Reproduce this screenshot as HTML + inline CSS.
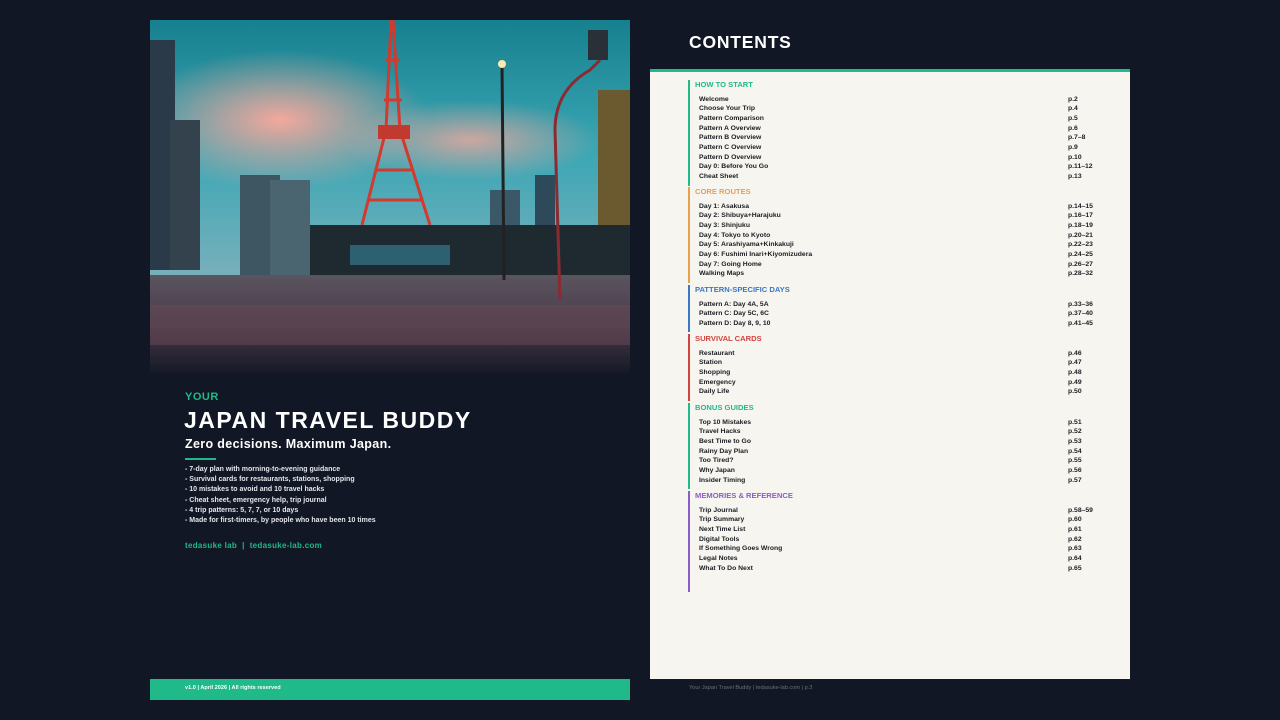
<!DOCTYPE html>
<html><head><meta charset="utf-8"><style>
*{margin:0;padding:0;box-sizing:border-box}
body{width:1280px;height:720px;background:#121725;position:relative;overflow:hidden;font-family:"Liberation Sans",sans-serif}
.abs{position:absolute}
.w{color:#fff;font-weight:bold}
.bul{font-size:7px;color:#e4e6ea;font-weight:bold;line-height:10.2px}
.sec{position:absolute;left:688px;width:460px;border-left:2px solid}
.sh{position:absolute;left:5px;font-size:7.6px;font-weight:bold;top:0px}
.it{position:absolute;left:9px;font-size:6.8px;color:#1a1c22;font-weight:bold;white-space:nowrap;margin-top:1.5px}
.pg{position:absolute;left:378px;font-size:6.8px;color:#1a1c22;font-weight:bold;margin-top:1.5px}
</style></head><body>
<svg class="abs" style="left:150px;top:20px" width="480" height="356" viewBox="0 0 480 356">
<defs>
<linearGradient id="sky" x1="0" y1="0" x2="0" y2="1"><stop offset="0" stop-color="#17808f"/><stop offset=".5" stop-color="#3aa6b4"/><stop offset="1" stop-color="#7ab0bc"/></linearGradient>
<linearGradient id="gr" x1="0" y1="0" x2="0" y2="1"><stop offset="0" stop-color="#5a5560"/><stop offset=".5" stop-color="#4a3a48"/><stop offset="1" stop-color="#121725"/></linearGradient>
<radialGradient id="pk" cx=".5" cy=".5" r=".5"><stop offset="0" stop-color="#f3a89c"/><stop offset="1" stop-color="#f0a59a" stop-opacity="0"/></radialGradient>
</defs>
<rect width="480" height="260" fill="url(#sky)"/>
<ellipse cx="130" cy="100" rx="150" ry="70" fill="url(#pk)"/>
<ellipse cx="320" cy="120" rx="130" ry="40" fill="url(#pk)" opacity=".8"/>
<rect x="0" y="20" width="25" height="230" fill="#2a3a48"/>
<rect x="20" y="100" width="30" height="150" fill="#34424e"/>
<rect x="90" y="155" width="40" height="100" fill="#3e5562"/>
<rect x="120" y="160" width="40" height="95" fill="#4a6470"/>
<rect x="340" y="170" width="30" height="85" fill="#3a5868"/>
<rect x="385" y="155" width="20" height="100" fill="#2e4a5a"/>
<g stroke="#d23a2e" stroke-width="3" fill="none">
<path d="M241 0 L236 110 L212 205 M243 0 L250 110 L280 205"/>
<path d="M236 40 L250 40 M234 80 L252 80 M226 150 L262 150 M218 180 L272 180"/>
</g>
<rect x="228" y="105" width="32" height="14" fill="#c2392f"/>
<rect x="448" y="70" width="32" height="220" fill="#6b5a30"/>
<rect x="160" y="205" width="330" height="50" fill="#1e2a30"/>
<rect x="200" y="225" width="100" height="20" fill="#2d6070"/>
<rect x="0" y="255" width="480" height="101" fill="url(#gr)"/>
<rect x="0" y="285" width="480" height="40" fill="#6a4a58" opacity=".5"/>
<line x1="352" y1="45" x2="354" y2="260" stroke="#222" stroke-width="3"/>
<circle cx="352" cy="44" r="4" fill="#ffe8b0"/>
<path d="M410 280 L405 110 Q405 70 440 50 L450 40" stroke="#8b2a30" stroke-width="3" fill="none"/>
<rect x="438" y="10" width="20" height="30" fill="#2a3038"/>
</svg>
<div class="abs" style="left:185px;top:391px;font-size:11px;font-weight:bold;color:#1fb98a;letter-spacing:.5px">YOUR</div>
<div class="abs w" style="left:184px;top:407px;font-size:23px;letter-spacing:1.5px">JAPAN TRAVEL BUDDY</div>
<div class="abs w" style="left:185px;top:437px;font-size:12.5px;letter-spacing:.35px">Zero decisions. Maximum Japan.</div>
<div class="abs" style="left:185px;top:458px;width:31px;height:2px;background:#1fb98a"></div>
<div class="abs bul" style="left:185px;top:465px">- 7-day plan with morning-to-evening guidance<br>- Survival cards for restaurants, stations, shopping<br>- 10 mistakes to avoid and 10 travel hacks<br>- Cheat sheet, emergency help, trip journal<br>- 4 trip patterns: 5, 7, 7, or 10 days<br>- Made for first-timers, by people who have been 10 times</div>
<div class="abs" style="left:185px;top:541px;font-size:8px;font-weight:bold;color:#1fb98a;letter-spacing:.3px">tedasuke lab &nbsp;|&nbsp; tedasuke-lab.com</div>
<div class="abs" style="left:150px;top:679px;width:480px;height:21px;background:#1fb98a"></div>
<div class="abs w" style="left:185px;top:685px;font-size:5.6px">v1.0 | April 2026 | All rights reserved</div>

<div class="abs" style="left:650px;top:20px;width:480px;height:49px;background:#121725"></div>
<div class="abs w" style="left:689px;top:32px;font-size:17.5px;letter-spacing:.8px">CONTENTS</div>
<div class="abs" style="left:650px;top:69px;width:480px;height:3px;background:#1fb98a"></div>
<div class="abs" style="left:650px;top:72px;width:480px;height:607px;background:#f7f5ef"></div>
<div class="abs" style="left:689px;top:685px;font-size:5.6px;color:#6a6f7a">Your Japan Travel Buddy | tedasuke-lab.com | p.3</div>

<div class="sec" style="top:80px;height:106px;border-color:#1fb98a"><div class="sh" style="color:#1fb98a">HOW TO START</div>
<div class="it" style="top:14px">Welcome</div><div class="pg" style="top:14px">p.2</div>
<div class="it" style="top:23.7px">Choose Your Trip</div><div class="pg" style="top:23.7px">p.4</div>
<div class="it" style="top:33.4px">Pattern Comparison</div><div class="pg" style="top:33.4px">p.5</div>
<div class="it" style="top:43.1px">Pattern A Overview</div><div class="pg" style="top:43.1px">p.6</div>
<div class="it" style="top:52.8px">Pattern B Overview</div><div class="pg" style="top:52.8px">p.7–8</div>
<div class="it" style="top:62.5px">Pattern C Overview</div><div class="pg" style="top:62.5px">p.9</div>
<div class="it" style="top:72.2px">Pattern D Overview</div><div class="pg" style="top:72.2px">p.10</div>
<div class="it" style="top:81.9px">Day 0: Before You Go</div><div class="pg" style="top:81.9px">p.11–12</div>
<div class="it" style="top:91.6px">Cheat Sheet</div><div class="pg" style="top:91.6px">p.13</div></div>

<div class="sec" style="top:187px;height:96px;border-color:#e8a04a"><div class="sh" style="color:#e8a04a">CORE ROUTES</div>
<div class="it" style="top:14px">Day 1: Asakusa</div><div class="pg" style="top:14px">p.14–15</div>
<div class="it" style="top:23.7px">Day 2: Shibuya+Harajuku</div><div class="pg" style="top:23.7px">p.16–17</div>
<div class="it" style="top:33.4px">Day 3: Shinjuku</div><div class="pg" style="top:33.4px">p.18–19</div>
<div class="it" style="top:43.1px">Day 4: Tokyo to Kyoto</div><div class="pg" style="top:43.1px">p.20–21</div>
<div class="it" style="top:52.8px">Day 5: Arashiyama+Kinkakuji</div><div class="pg" style="top:52.8px">p.22–23</div>
<div class="it" style="top:62.5px">Day 6: Fushimi Inari+Kiyomizudera</div><div class="pg" style="top:62.5px">p.24–25</div>
<div class="it" style="top:72.2px">Day 7: Going Home</div><div class="pg" style="top:72.2px">p.26–27</div>
<div class="it" style="top:81.9px">Walking Maps</div><div class="pg" style="top:81.9px">p.28–32</div></div>

<div class="sec" style="top:285px;height:47px;border-color:#3a78c2"><div class="sh" style="color:#3a78c2">PATTERN-SPECIFIC DAYS</div>
<div class="it" style="top:14px">Pattern A: Day 4A, 5A</div><div class="pg" style="top:14px">p.33–36</div>
<div class="it" style="top:23.7px">Pattern C: Day 5C, 6C</div><div class="pg" style="top:23.7px">p.37–40</div>
<div class="it" style="top:33.4px">Pattern D: Day 8, 9, 10</div><div class="pg" style="top:33.4px">p.41–45</div></div>

<div class="sec" style="top:334px;height:67px;border-color:#d0443e"><div class="sh" style="color:#d0443e">SURVIVAL CARDS</div>
<div class="it" style="top:14px">Restaurant</div><div class="pg" style="top:14px">p.46</div>
<div class="it" style="top:23.7px">Station</div><div class="pg" style="top:23.7px">p.47</div>
<div class="it" style="top:33.4px">Shopping</div><div class="pg" style="top:33.4px">p.48</div>
<div class="it" style="top:43.1px">Emergency</div><div class="pg" style="top:43.1px">p.49</div>
<div class="it" style="top:52.8px">Daily Life</div><div class="pg" style="top:52.8px">p.50</div></div>

<div class="sec" style="top:403px;height:86px;border-color:#1fb98a"><div class="sh" style="color:#1fb98a">BONUS GUIDES</div>
<div class="it" style="top:14px">Top 10 Mistakes</div><div class="pg" style="top:14px">p.51</div>
<div class="it" style="top:23.7px">Travel Hacks</div><div class="pg" style="top:23.7px">p.52</div>
<div class="it" style="top:33.4px">Best Time to Go</div><div class="pg" style="top:33.4px">p.53</div>
<div class="it" style="top:43.1px">Rainy Day Plan</div><div class="pg" style="top:43.1px">p.54</div>
<div class="it" style="top:52.8px">Too Tired?</div><div class="pg" style="top:52.8px">p.55</div>
<div class="it" style="top:62.5px">Why Japan</div><div class="pg" style="top:62.5px">p.56</div>
<div class="it" style="top:72.2px">Insider Timing</div><div class="pg" style="top:72.2px">p.57</div></div>

<div class="sec" style="top:491px;height:101px;border-color:#8a5cc8"><div class="sh" style="color:#8a5cc8">MEMORIES &amp; REFERENCE</div>
<div class="it" style="top:14px">Trip Journal</div><div class="pg" style="top:14px">p.58–59</div>
<div class="it" style="top:23.7px">Trip Summary</div><div class="pg" style="top:23.7px">p.60</div>
<div class="it" style="top:33.4px">Next Time List</div><div class="pg" style="top:33.4px">p.61</div>
<div class="it" style="top:43.1px">Digital Tools</div><div class="pg" style="top:43.1px">p.62</div>
<div class="it" style="top:52.8px">If Something Goes Wrong</div><div class="pg" style="top:52.8px">p.63</div>
<div class="it" style="top:62.5px">Legal Notes</div><div class="pg" style="top:62.5px">p.64</div>
<div class="it" style="top:72.2px">What To Do Next</div><div class="pg" style="top:72.2px">p.65</div></div>
</body></html>
